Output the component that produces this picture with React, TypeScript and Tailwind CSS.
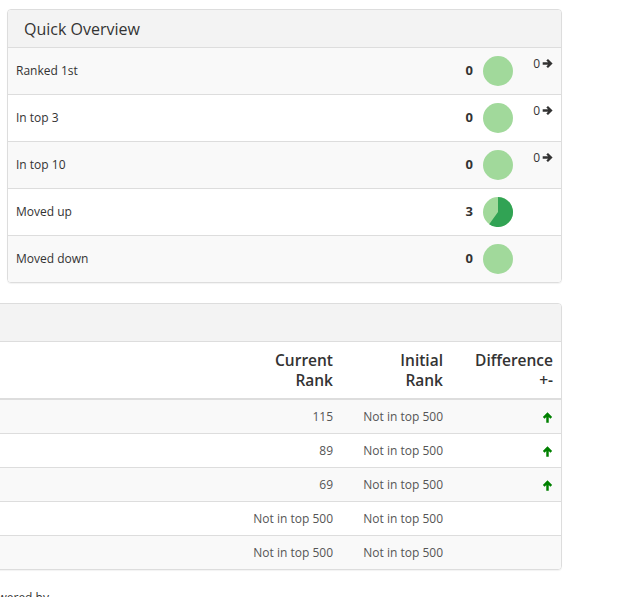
import React from 'react';

type OverviewRow = {
  label: string;
  count: number;
  share: number; // fraction of the pie in dark green
  trend?: number;
};

const overview: OverviewRow[] = [
  { label: 'Ranked 1st', count: 0, share: 0, trend: 0 },
  { label: 'In top 3', count: 0, share: 0, trend: 0 },
  { label: 'In top 10', count: 0, share: 0, trend: 0 },
  { label: 'Moved up', count: 3, share: 0.6 },
  { label: 'Moved down', count: 0, share: 0 },
];

const ranks = [
  { current: '115', initial: 'Not in top 500', up: true },
  { current: '89', initial: 'Not in top 500', up: true },
  { current: '69', initial: 'Not in top 500', up: true },
  { current: 'Not in top 500', initial: 'Not in top 500', up: false },
  { current: 'Not in top 500', initial: 'Not in top 500', up: false },
];

const Pie: React.FC<{ share: number }> = ({ share }) => {
  const r = 15;
  const a = share * Math.PI * 2;
  const x = r + r * Math.sin(a);
  const y = r - r * Math.cos(a);
  const large = share > 0.5 ? 1 : 0;
  return (
    <svg width="30" height="30" viewBox="0 0 30 30" className="shrink-0">
      <circle cx="15" cy="15" r="15" fill="#a1d99b" />
      {share > 0 && (
        <path d={`M15 15 L15 0 A15 15 0 ${large} 1 ${x} ${y} Z`} fill="#31a354" />
      )}
    </svg>
  );
};

const ArrowRight = () => (
  <svg width="11" height="11" viewBox="0 0 16 16" className="inline-block ml-[2px] -mt-[2px]">
    <path d="M1 8 H13 M7.5 2.5 L13 8 L7.5 13.5" fill="none" stroke="#333" strokeWidth="3.4" />
  </svg>
);

const ArrowUp = () => (
  <svg width="11" height="11" viewBox="0 0 16 16" className="inline-block">
    <path d="M8 15.5 V3 M2.5 8.5 L8 3 L13.5 8.5" fill="none" stroke="#008000" strokeWidth="3.6" />
  </svg>
);

export default function App() {
  return (
    <div
      className="h-[597px] overflow-hidden bg-white text-[#333]"
      style={{ fontFamily: '"Open Sans", "Liberation Sans", sans-serif' }}
    >
      <div className="pt-[9px] pl-[7px] w-[562px]">
        {/* Quick overview panel */}
        <div className="border border-[#ddd] rounded-[4px] overflow-hidden mb-[20px] shadow-[0_1px_1px_rgba(0,0,0,0.05)]">
          <div className="h-[37px] bg-[#f3f3f3] flex items-center pl-[16px] text-[16px]">
            Quick Overview
          </div>
          {overview.map((row, i) => (
            <div
              key={row.label}
              className={`h-[47px] flex items-center pl-[8px] pr-[8px] text-[12px] border-t border-[#ddd] ${i % 2 === 0 ? 'bg-[#f9f9f9]' : 'bg-white'}`}
            >
              <span className="flex-1">{row.label}</span>
              <span className="font-bold text-[13px]">{row.count}</span>
              <span className="ml-[10px]">
                <Pie share={row.share} />
              </span>
              <span className="w-[40px] self-start pt-[9px] text-right text-[12px] leading-[14px]">
                {row.trend !== undefined && (
                  <>
                    <span className="text-[#333]">{row.trend}</span>
                    <ArrowRight />
                  </>
                )}
              </span>
            </div>
          ))}
        </div>

        {/* Rank table panel */}
        <div className="-ml-[60px] border border-[#ddd] rounded-[4px] overflow-hidden shadow-[0_1px_1px_rgba(0,0,0,0.05)]">
          <div className="h-[37px] bg-[#f3f3f3]" />
          <table className="w-full border-collapse">
            <thead>
              <tr className="text-[15.5px] font-semibold leading-[20px] border-t border-[#ddd]">
                <th className="border-b-2 border-[#ddd] px-2 py-2" />
                <th className="w-[110px] border-b-2 border-[#ddd] px-2 py-2 text-right font-semibold">Current<br />Rank</th>
                <th className="w-[110px] border-b-2 border-[#ddd] px-2 py-2 text-right font-semibold">Initial<br />Rank</th>
                <th className="w-[110px] border-b-2 border-[#ddd] px-2 py-2 text-right font-semibold">Difference<br />+-</th>
              </tr>
            </thead>
            <tbody className="text-[12px] leading-[17px] text-[#555]">
              {ranks.map((r, i) => (
                <tr key={i} className={i % 2 === 0 ? 'bg-[#f9f9f9]' : 'bg-white'}>
                  <td className={`px-2 py-2 ${i > 0 ? 'border-t border-[#ddd]' : ''}`} />
                  <td className={`px-2 py-2 text-right ${i > 0 ? 'border-t border-[#ddd]' : ''}`}>{r.current}</td>
                  <td className={`px-2 py-2 text-right ${i > 0 ? 'border-t border-[#ddd]' : ''}`}>{r.initial}</td>
                  <td className={`px-2 py-2 text-right ${i > 0 ? 'border-t border-[#ddd]' : ''}`}>
                    {r.up && <ArrowUp />}
                  </td>
                </tr>
              ))}
            </tbody>
          </table>
        </div>

        <div className="-ml-[24px] mt-[19px] text-[12px] text-[#333]">Powered by</div>
      </div>
    </div>
  );
}
